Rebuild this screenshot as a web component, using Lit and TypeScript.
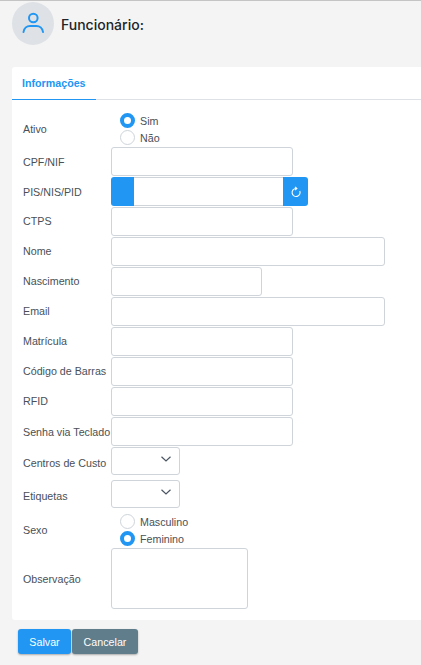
import { LitElement, html, css } from 'lit';
import { customElement } from 'lit/decorators.js';

type Field = {
  label: string;
  kind: 'small' | 'wide' | 'date' | 'generated';
  lift?: boolean;
};

const topFields: Field[] = [
  { label: 'CPF/NIF', kind: 'small' },
  { label: 'PIS/NIS/PID', kind: 'generated' },
  { label: 'CTPS', kind: 'small', lift: true },
  { label: 'Nome', kind: 'wide', lift: true },
  { label: 'Nascimento', kind: 'date', lift: true },
  { label: 'Email', kind: 'wide', lift: true },
  { label: 'Matrícula', kind: 'small', lift: true },
  { label: 'Código de Barras', kind: 'small', lift: true },
  { label: 'RFID', kind: 'small', lift: true },
  { label: 'Senha via Teclado', kind: 'small' },
];

@customElement('app-root')
export class AppRoot extends LitElement {
  private renderRadios(options: string[], selected: string) {
    return html`<div class="radios">
      ${options.map(
        option => html`<div class="radio-line">
          <span class="radio ${option === selected ? 'on' : ''}"></span>
          <span>${option}</span>
        </div>`,
      )}
    </div>`;
  }

  private renderField(field: Field) {
    if (field.kind === 'generated') {
      return html`<div class="row">
        <label>${field.label}</label>
        <div class="generated">
          <span class="addon-left"></span>
          <span class="generated-input"></span>
          <span class="addon-right">
            <svg width="12" height="12" viewBox="0 0 12 12" fill="none" stroke="#fff" stroke-width="1.1">
              <path d="M9.8 5A4 4 0 1 1 6 2.500" />
              <path d="M5 .8 6.900 2.500 5 4.200" />
            </svg>
          </span>
        </div>
      </div>`;
    }
    return html`<div class="row ${field.lift ? 'lift' : ''}">
      <label>${field.label}</label>
      <span class="input ${field.kind}"></span>
    </div>`;
  }

  private renderSelect(label: string) {
    return html`<div class="row select-row">
      <label>${label}</label>
      <span class="select">
        <svg width="10" height="6" viewBox="0 0 10 6" fill="none" stroke="#4b5563" stroke-width="1.2">
          <path d="M.5 .8 5 5 9.500 .8" />
        </svg>
      </span>
    </div>`;
  }

  render() {
    return html`
      <header>
        <div class="avatar">
          <svg width="24" height="24" viewBox="0 0 24 24" fill="none" stroke="#2196f3" stroke-width="2" stroke-linecap="round">
            <circle cx="12.300" cy="6" r="4.300" />
            <path d="M2.500 20c.5-4 3.500-6 6.500-6h6.500c3 0 6 2 6.500 6" />
          </svg>
        </div>
        <h1>Funcionário:</h1>
      </header>
      <section class="card">
        <nav><span class="tab">Informações</span></nav>
        <div class="form">
          <div class="row radio-row">
            <label>Ativo</label>
            ${this.renderRadios(['Sim', 'Não'], 'Sim')}
          </div>
          ${topFields.map(field => this.renderField(field))}
          ${this.renderSelect('Centros de Custo')}
          ${this.renderSelect('Etiquetas')}
          <div class="row radio-row">
            <label>Sexo</label>
            ${this.renderRadios(['Masculino', 'Feminino'], 'Feminino')}
          </div>
          <div class="row">
            <label>Observação</label>
            <span class="textarea"></span>
          </div>
        </div>
      </section>
      <footer>
        <button class="save">Salvar</button>
        <button class="cancel">Cancelar</button>
      </footer>
    `;
  }

  static styles = css`
    :host {
      display: block;
      height: 665px;
      overflow: hidden;
      box-sizing: border-box;
      background: #f4f4f4;
      border-top: 1px solid #c4c4c4;
      font-family: 'Liberation Sans', Arial, sans-serif;
      font-size: 10.7px;
      color: #495057;
    }

    header {
      display: flex;
      align-items: center;
      gap: 7px;
      height: 43px;
      margin: 1px 0 22px 12px;
    }

    .avatar {
      width: 42px;
      height: 43px;
      border-radius: 50%;
      background: #dee2e6;
      display: flex;
      align-items: center;
      justify-content: center;
    }

    h1 {
      margin: 2px 0 0;
      font-family: Inter, sans-serif;
      font-size: 14px;
      font-weight: 500;
      color: #212529;
    }

    .card {
      margin-left: 12px;
      height: 553px;
      background: #fff;
      border-radius: 3px 0 0 3px;
    }

    nav {
      height: 32px;
      border-bottom: 1px solid #dee2e6;
      display: flex;
    }

    .tab {
      box-sizing: border-box;
      width: 84px;
      height: 33px;
      padding: 10px 0 0 10px;
      font-weight: 700;
      color: #2196f3;
      border-bottom: 1px solid #2196f3;
    }

    .form {
      display: flex;
      flex-direction: column;
      gap: 1px;
      padding: 12px 0 0 11px;
    }

    .row {
      display: grid;
      grid-template-columns: 88px auto;
      justify-content: start;
      align-items: center;
      white-space: nowrap;
    }

    .lift label {
      padding-bottom: 2px;
    }

    .radio-row {
      height: 34px;
    }

    .select-row {
      margin-bottom: 4px;
    }

    .select-row label {
      padding-top: 4px;
    }

    .radios {
      display: flex;
      flex-direction: column;
      gap: 3px;
      padding-left: 9px;
    }

    .radio-line {
      display: flex;
      align-items: center;
      gap: 5px;
      height: 14px;
    }

    .radio {
      box-sizing: border-box;
      width: 15px;
      height: 15px;
      border-radius: 50%;
      background: #fff;
      border: 1.5px solid #ced4da;
    }

    .radio.on {
      border: 4.500px solid #2196f3;
    }

    .input,
    .select,
    .textarea {
      display: block;
      box-sizing: border-box;
      background: #fff;
      border: 1px solid #ced4da;
      border-radius: 3px;
    }

    .input {
      height: 29px;
    }

    .small {
      width: 182px;
    }

    .wide {
      width: 274px;
    }

    .date {
      width: 151px;
    }

    .generated {
      display: flex;
      height: 29px;
      width: 197px;
    }

    .addon-left,
    .addon-right {
      display: flex;
      align-items: center;
      justify-content: center;
      background: #2196f3;
    }

    .addon-left {
      width: 23px;
      border-radius: 3px 0 0 3px;
    }

    .addon-right {
      width: 25px;
      border-radius: 0 3px 3px 0;
    }

    .generated-input {
      flex: 1;
      border-top: 1px solid #ced4da;
      border-bottom: 1px solid #ced4da;
    }

    .select {
      width: 69px;
      height: 28px;
      display: flex;
      align-items: center;
      justify-content: flex-end;
      padding: 0 8px 4px 0;
    }

    .textarea {
      width: 137px;
      height: 61px;
    }

    footer {
      display: flex;
      gap: 1px;
      padding: 9px 0 0 18px;
    }

    button {
      height: 25px;
      border: 0;
      border-radius: 3px;
      color: #fff;
      font: 10.700px 'Liberation Sans', Arial, sans-serif;
      box-shadow: 0 1px 2px rgba(0, 0, 0, 0.3);
      padding: 0;
    }

    .save {
      width: 53px;
      background: #2196f3;
    }

    .cancel {
      width: 66px;
      background: #607d8b;
    }
  `;
}
